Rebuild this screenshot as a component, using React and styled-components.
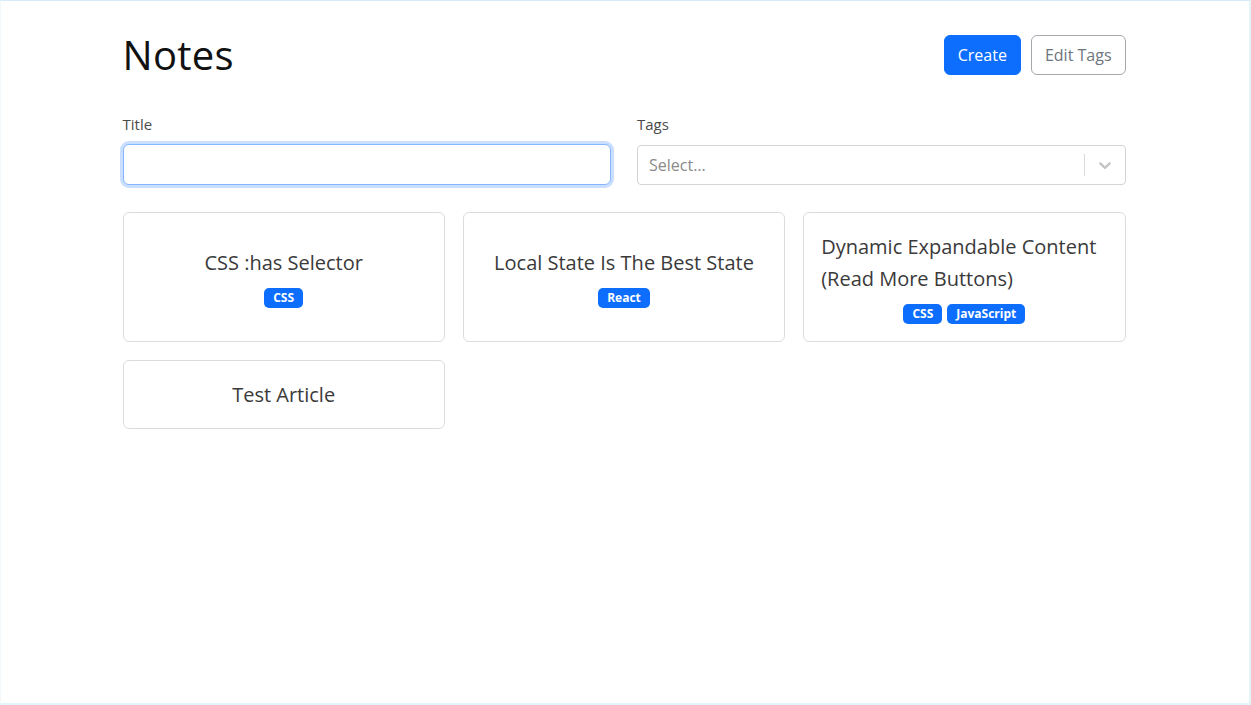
import React from 'react'
import styled, { createGlobalStyle } from 'styled-components'

const GlobalStyle = createGlobalStyle`
  * { box-sizing: border-box; }
  body {
    margin: 0;
    background: #ffffff;
    font-family: "Open Sans", "Noto Sans", sans-serif;
    color: #212529;
  }
`

const Frame = styled.div`
  min-height: 100vh;
  border-top: 1px solid #d6ecfb;
  border-right: 2px solid #e2f6fa;
  border-bottom: 2px solid #e2f6fa;
  border-left: 1px solid #f2f9fc;
`

const Container = styled.div`
  width: 1003px;
  margin: 0 auto;
  padding-top: 30px;
  padding-right: 2px;
  box-sizing: content-box;
`

const Header = styled.div`
  display: flex;
  align-items: center;
  justify-content: space-between;
  margin-bottom: 33px;
`

const Heading = styled.h1`
  margin: 0;
  font-size: 40px;
  font-weight: 500;
  line-height: 48px;
  color: #111;
  letter-spacing: 0.3px;
`

const ButtonStack = styled.div`
  display: flex;
  gap: 10px;
`

const Button = styled.button`
  height: 40px;
  padding: 0 13px;
  font-family: inherit;
  font-size: 16px;
  border-radius: 6px;
  cursor: pointer;
  background: ${p => (p.$primary ? '#0d6efd' : '#fff')};
  color: ${p => (p.$primary ? '#fff' : '#6c757d')};
  border: 1px solid ${p => (p.$primary ? '#0d6efd' : '#a3a8ad')};
`

const FilterRow = styled.div`
  display: grid;
  grid-template-columns: 1fr 1fr;
  column-gap: 26px;
  margin-bottom: 27px;
`

const Field = styled.div`
  display: flex;
  flex-direction: column;
`

const Label = styled.label`
  font-size: 15px;
  line-height: 24px;
  color: #4a4a4a;
  margin-bottom: 8px;
`

const TextInput = styled.input`
  height: 41px;
  border: 1px solid #86b7fe;
  border-radius: 6px;
  box-shadow: 0 0 0 3px rgba(13, 110, 253, 0.22);
  outline: none;
  padding: 0 12px;
  font-family: inherit;
  font-size: 16px;
`

const SelectBox = styled.div`
  height: 40px;
  margin-top: 1px;
  border: 1px solid #d4d4d4;
  border-radius: 4px;
  display: flex;
  align-items: center;
  padding-left: 11px;
`

const Placeholder = styled.span`
  flex: 1;
  font-size: 16px;
  color: #8a8a8a;
`

const Separator = styled.span`
  width: 1px;
  align-self: stretch;
  margin: 8px 0;
  background: #dadada;
`

const Indicator = styled.span`
  display: flex;
  padding: 0 10px;
  color: #c4c4c4;
`

const CardGrid = styled.div`
  display: grid;
  grid-template-columns: repeat(3, 1fr);
  gap: 18px;
`

const Card = styled.div`
  border: 1px solid #dcdcdc;
  border-radius: 6px;
  padding: 18px 17px 17px;
  display: flex;
  flex-direction: column;
  align-items: center;
  justify-content: center;
  gap: 9px;
`

const CardTitle = styled.span`
  font-size: 20px;
  line-height: 32px;
  color: #3a3a3a;
`

const BadgeRow = styled.div`
  display: flex;
  gap: 5px;
`

const Badge = styled.span`
  background: #0d6efd;
  color: #fff;
  font-size: 12px;
  font-weight: 700;
  line-height: 20px;
  padding: 0 9px;
  border-radius: 5px;
`

const notes = [
  { title: 'CSS :has Selector', tags: ['CSS'] },
  { title: 'Local State Is The Best State', tags: ['React'] },
  { title: 'Dynamic Expandable Content (Read More Buttons)', tags: ['CSS', 'JavaScript'] },
  { title: 'Test Article', tags: [] },
]

const Chevron = () => (
  <svg width="20" height="20" viewBox="0 0 20 20" fill="currentColor">
    <path d="M4.516 7.548c0.436-0.446 1.043-0.481 1.576 0l3.908 3.747 3.908-3.747c0.533-0.481 1.141-0.446 1.574 0 0.436 0.445 0.408 1.197 0 1.615-0.406 0.418-4.695 4.502-4.695 4.502-0.217 0.223-0.502 0.335-0.787 0.335s-0.57-0.112-0.789-0.335c0 0-4.287-4.084-4.695-4.502s-0.436-1.17 0-1.615z" />
  </svg>
)

export default function App() {
  return (
    <Frame>
      <GlobalStyle />
      <Container>
        <Header>
          <Heading>Notes</Heading>
          <ButtonStack>
            <Button $primary>Create</Button>
            <Button>Edit Tags</Button>
          </ButtonStack>
        </Header>

        <FilterRow>
          <Field>
            <Label>Title</Label>
            <TextInput type="text" />
          </Field>
          <Field>
            <Label>Tags</Label>
            <SelectBox>
              <Placeholder>Select...</Placeholder>
              <Separator />
              <Indicator>
                <Chevron />
              </Indicator>
            </SelectBox>
          </Field>
        </FilterRow>

        <CardGrid>
          {notes.map(note => (
            <Card key={note.title}>
              <CardTitle>{note.title}</CardTitle>
              {note.tags.length > 0 && (
                <BadgeRow>
                  {note.tags.map(tag => (
                    <Badge key={tag}>{tag}</Badge>
                  ))}
                </BadgeRow>
              )}
            </Card>
          ))}
        </CardGrid>
      </Container>
    </Frame>
  )
}
